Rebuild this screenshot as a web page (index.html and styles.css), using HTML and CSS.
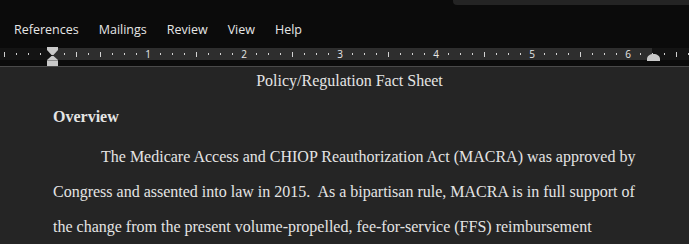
FILE: index.html
```html
<html>
  <head>
    <title>Policy/Regulation Fact Sheet</title>
    <meta name="viewport" content="width=device-width, initial-scale=1">
    <link rel="stylesheet" href="styles.css">
  </head>
  <body>
    <header class="chrome">
      <div class="titlestrip"><div class="search"></div></div>
      <nav class="tabs">
        <span class="tab">References</span>
        <span class="tab">Mailings</span>
        <span class="tab">Review</span>
        <span class="tab">View</span>
        <span class="tab">Help</span>
      </nav>
      <div class="ruler">
        <div class="band">
          <span>1</span><span>2</span><span>3</span><span>4</span><span>5</span><span>6</span>
        </div>
        <svg class="indent" width="11" height="19" viewBox="0 0 11 19">
          <path d="M0 0H11V3L6.5 8H4.5L0 3Z" fill="#c9c9c9" />
          <path d="M4.5 9H6.5L11 13V19H0V13Z" fill="#c9c9c9" />
          <rect x="0" y="13" width="11" height="1" fill="#8a8a8a" />
        </svg>
        <svg class="rindent" width="13" height="7" viewBox="0 0 13 7">
          <path d="M0 7V5C0 2 3 0 6.5 0S13 2 13 5V7Z" fill="#c9c9c9" />
        </svg>
      </div>
    </header>

    <main class="page">
      <p class="title">Policy/Regulation Fact Sheet</p>
      <h3>Overview</h3>
      <p class="body">The Medicare Access and CHIOP Reauthorization Act (MACRA) was approved by Congress and assented into law in 2015.&nbsp; As a bipartisan rule, MACRA is in full support of the change from the present volume-propelled, fee-for-service (FFS) reimbursement</p>
    </main>
  </body>
</html>
```

FILE: styles.css
```css
body {
  margin: 0;
  width: 689px;
  height: 244px;
  overflow: hidden;
  background: #252525;
}

.chrome {
  background: #0b0b0b;
  height: 66px;
  border-bottom: 1px solid #4a4a4a;
  position: relative;
}
.titlestrip {
  display: flex;
  justify-content: flex-end;
  height: 6px;
}
.search {
  width: 236px;
  height: 5px;
  background: #242424;
  border-bottom-left-radius: 4px;
}

.tabs {
  display: flex;
  gap: 20px;
  padding: 15px 0 0 14px;
  height: 19px;
  font-family: "Open Sans", "Noto Sans", sans-serif;
  font-size: 12.5px;
  color: #e6e6e6;
}

.ruler {
  margin-top: 8px;
  height: 12px;
  background-color: #141414;
  background-image:
    repeating-linear-gradient(90deg, #cfcfcf 0 1px, transparent 1px 96px),
    repeating-linear-gradient(90deg, #cfcfcf 0 1px, transparent 1px 12px);
  background-size: 100% 5px, 100% 2px;
  background-position: 4px 4px, 4px 5px;
  background-repeat: repeat-x;
}
.band {
  margin-left: 52px;
  width: 600px;
  height: 12px;
  display: flex;
  padding-left: 48px;
  box-sizing: border-box;
  background-color: #2e2e2e;
  background-image:
    repeating-linear-gradient(90deg, #d2d2d2 0 1px, transparent 1px 96px),
    repeating-linear-gradient(90deg, #d2d2d2 0 1px, transparent 1px 12px);
  background-size: 100% 5px, 100% 2px;
  background-position: 48px 4px, 12px 5px;
  background-repeat: repeat-x;
}
.band span {
  flex: 0 0 96px;
  text-align: center;
  font-family: "Open Sans", "Noto Sans", sans-serif;
  font-size: 10px;
  line-height: 12px;
  color: #e8e8e8;
  background: #2e2e2e;
  background-clip: content-box;
  padding: 0 42px;
  box-sizing: border-box;
}
.indent {
  position: absolute;
  left: 47px;
  top: 47px;
}
.rindent {
  position: absolute;
  left: 647px;
  top: 54px;
}

.page {
  font-family: "Liberation Serif", "Times New Roman", serif;
  font-size: 16px;
  color: #e4e4e4;
  padding: 3px 51px 0 53px;
}
.title {
  margin: 0;
  text-align: center;
  line-height: 22px;
  padding-left: 8px;
}
h3 {
  margin: 14px 0 0;
  font-size: 16px;
  line-height: 22px;
}
.body {
  margin: 11px 0 0;
  line-height: 35px;
  text-indent: 48px;
}
```
